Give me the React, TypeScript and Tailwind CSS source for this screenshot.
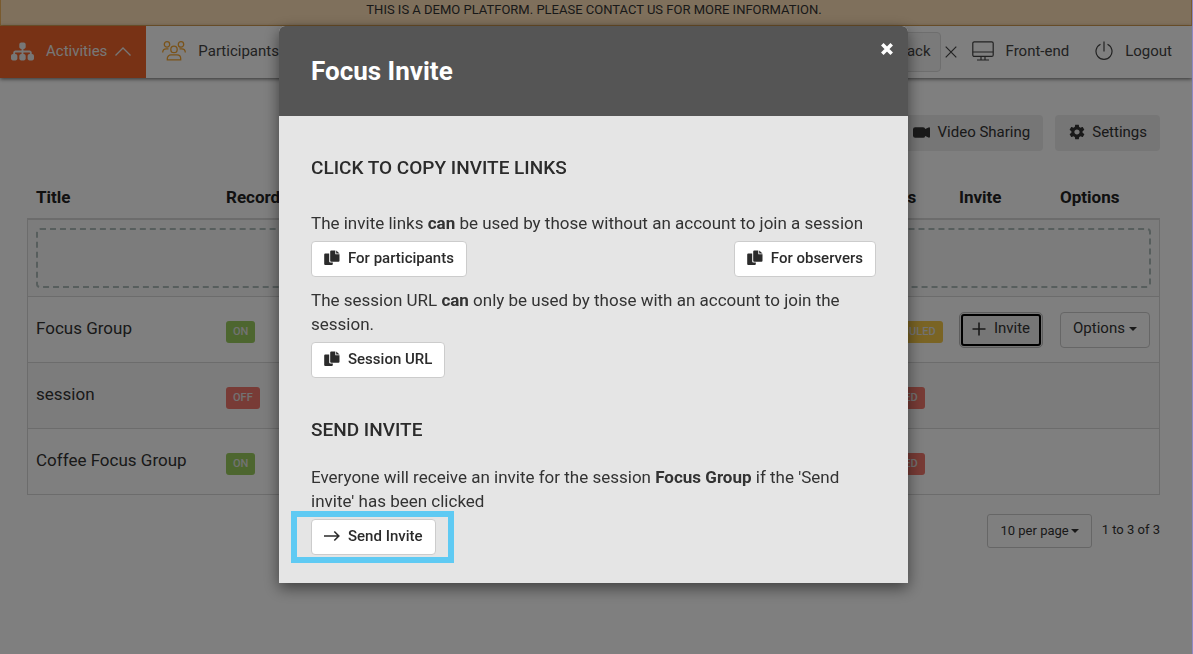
import type { ReactNode } from "react";
import { FaSitemap } from "react-icons/fa6";
import { BsCameraVideoFill } from "react-icons/bs";
import { IoMdSettings } from "react-icons/io";

type Tone = "green" | "red" | "yellow";

const tones: Record<Tone, string> = {
  green: "bg-[#9bcc5f]",
  red: "bg-[#f0776c]",
  yellow: "bg-[#f4c849]",
};

function Badge({ tone, children }: { tone: Tone; children: ReactNode }) {
  return (
    <span
      className={
        "inline-block rounded-[3px] px-[7px] py-[3px] text-[11px] leading-4 font-medium text-[#e4e4e4] " +
        tones[tone]
      }
    >
      {children}
    </span>
  );
}

function Caret() {
  return (
    <svg width="8" height="4" viewBox="0 0 8 4" fill="currentColor" aria-hidden="true">
      <path d="M0 0h8L4 4z" />
    </svg>
  );
}

function PeopleIcon() {
  return (
    <svg width="24" height="20" viewBox="0 0 24 20" fill="none" stroke="currentColor" strokeWidth="1.3" aria-hidden="true">
      <circle cx="5" cy="3.4" r="2.7" />
      <circle cx="19" cy="3.4" r="2.7" />
      <circle cx="12" cy="8.4" r="3.2" />
      <path d="M.7 11.4c0-2.2 1.5-3.6 3.6-3.6h2.2M23.3 11.4c0-2.2-1.5-3.6-3.6-3.6h-2.2" />
      <path d="M5.3 18.8v-1.200c0-2.200 1.600-3.700 3.700-3.700h6c2.100 0 3.700 1.500 3.700 3.700v1.200z" />
    </svg>
  );
}

function MonitorIcon() {
  return (
    <svg width="22" height="20" viewBox="0 0 22 20" fill="none" stroke="currentColor" strokeWidth="1.2" aria-hidden="true">
      <rect x=".8" y=".8" width="20.4" height="14.6" rx="1.5" />
      <path d="M.8 11h20.400M9 15.500v3M13 15.500v3M5 19h12" />
    </svg>
  );
}

function PowerIcon() {
  return (
    <svg width="18" height="20" viewBox="0 0 18 20" fill="none" stroke="currentColor" strokeWidth="1.2" aria-hidden="true">
      <path d="M9 .5v10M5.500 3.200a8 8 0 1 0 7 0" />
    </svg>
  );
}

function CopyIcon() {
  return (
    <svg width="16" height="16" viewBox="0 0 16 16" fill="currentColor" aria-hidden="true">
      <path d="M1.200 3.600H5.200V11.600a1 1 0 0 0 1 1H8.800V13.900a1 1 0 0 1-1 1H1.200a1 1 0 0 1-1-1V4.600a1 1 0 0 1 1-1z" />
      <path d="M7.200.5H11.300V4.200H15.500V10.700a1 1 0 0 1-1 1H7.200a1 1 0 0 1-1-1V1.500a1 1 0 0 1 1-1z" />
      <path d="M12.200.4L15.600 3.500H12.200z" />
    </svg>
  );
}

function ArrowIcon() {
  return (
    <svg width="16" height="12" viewBox="0 0 16 12" fill="none" stroke="currentColor" strokeWidth="1.6" aria-hidden="true">
      <path d="M0 6h14.500M10.300 1.500L14.800 6l-4.500 4.500" />
    </svg>
  );
}

function ModalButton({ icon, children }: { icon: ReactNode; children: ReactNode }) {
  return (
    <button
      type="button"
      className="flex h-9 items-center gap-2 rounded border border-[#ccc] bg-white px-3 pb-0.5 text-[15px] leading-5 font-medium text-[#2b2b2b]"
    >
      {icon}
      {children}
    </button>
  );
}

const rows: { title: string; record: string; status: string; tone: Tone; open: boolean }[] = [
  { title: "Focus Group", record: "ON", status: "SCHEDULED", tone: "yellow", open: true },
  { title: "session", record: "OFF", status: "EXPIRED", tone: "red", open: false },
  { title: "Coffee Focus Group", record: "ON", status: "EXPIRED", tone: "red", open: false },
];

function Page() {
  return (
    <div>
      <div className="h-[26px] border border-t-0 border-[#f3b45c] bg-[#fee0b8] pr-1 text-center text-[13px] leading-5 text-[#333] uppercase">
        This is a demo platform. Please contact us for more information.
      </div>

      <nav className="flex h-[52px] items-center bg-white pr-5 text-[15px] text-[#444] shadow-[0_1px_4px_rgba(0,0,0,0.6)]">
        <a href="#activities" className="flex h-full items-center gap-3 bg-[#f0642a] pr-[15px] pb-0.5 pl-[11px] text-[#eee]">
          <FaSitemap size={23} aria-hidden="true" />
          <span className="flex items-center gap-2">
            Activities
            <svg width="16" height="9" viewBox="0 0 16 9" fill="none" stroke="currentColor" strokeWidth="1.3" aria-hidden="true">
              <path d="M.5 8.500L8 1l7.500 7.500" />
            </svg>
          </span>
        </a>
        <a href="#participants" className="flex h-full items-center gap-3 pb-0.5 pl-4">
          <span className="text-[#f5a633]">
            <PeopleIcon />
          </span>
          Participants
        </a>
        <div className="ml-auto flex items-center">
          <button type="button" className="h-10 rounded border border-[#ddd] bg-[#f4f4f4] px-[9px] pb-0.5">
            Feedback
          </button>
          <button type="button" aria-label="Dismiss feedback" className="mr-[15px] ml-1 flex h-5 w-3 items-center">
            <svg width="12" height="12" viewBox="0 0 12 12" fill="none" stroke="currentColor" strokeWidth="1.2" aria-hidden="true">
              <path d="M.7 .7l10.600 10.600M11.300 .7L.7 11.300" />
            </svg>
          </button>
          <a href="#front-end" className="mr-[26px] flex items-center gap-3 pb-0.5">
            <MonitorIcon />
            Front-end
          </a>
          <a href="#logout" className="flex items-center gap-3 pb-0.5">
            <PowerIcon />
            Logout
          </a>
        </div>
      </nav>

      <main className="mt-[37px] pr-8 pl-[27px] text-[#333]">
        <div className="flex justify-end gap-3">
          <button type="button" className="flex h-9 items-center gap-2 rounded bg-[#ececec] px-[13px] pb-0.5 text-[15px]">
            <BsCameraVideoFill size={17} aria-hidden="true" />
            Video Sharing
          </button>
          <button type="button" className="flex h-9 items-center gap-1.5 rounded bg-[#ececec] px-[13px] pb-0.5 text-[15px]">
            <IoMdSettings size={18} aria-hidden="true" />
            Settings
          </button>
        </div>

        <table className="mt-6 w-full table-fixed border-separate border-spacing-0 text-left text-[17px]">
          <colgroup>
            <col className="w-[190px]" />
            <col />
            <col className="w-[92px]" />
            <col className="w-[101px]" />
            <col className="w-[109px]" />
          </colgroup>
          <thead>
            <tr className="h-[45px] leading-6 text-[#222]">
              {["Title", "Record", "Status", "Invite", "Options"].map((heading) => (
                <th key={heading} scope="col" className="border-b-2 border-[#d9d9d9] px-[9px] font-bold">
                  {heading}
                </th>
              ))}
            </tr>
          </thead>
          <tbody>
            <tr>
              <td colSpan={5} className="h-[77px] border-x border-b border-[#d9d9d9] bg-[#f9f9f9] px-2">
                <div className="h-[60px] rounded border-2 border-dashed border-[#aebcbb]" />
              </td>
            </tr>
            {rows.map((row) => (
              <tr key={row.title} className="h-[66px] even:bg-white odd:bg-[#f9f9f9]">
                <td className="border-b border-l border-[#d9d9d9] px-2 pb-0.5">{row.title}</td>
                <td className="border-b border-[#d9d9d9] px-[9px]">
                  <Badge tone={row.record === "ON" ? "green" : "red"}>{row.record}</Badge>
                </td>
                <td className="border-b border-[#d9d9d9] pl-[9px]">
                  <Badge tone={row.tone}>{row.status}</Badge>
                </td>
                <td className="border-b border-[#d9d9d9] px-[9px]">
                  {row.open && (
                    <button
                      type="button"
                      className="flex h-9 w-[84px] items-center justify-center gap-2 rounded-[5px] border border-[#bbb] bg-[#ececec] pb-0.5 text-[15px] outline-2 -outline-offset-4 outline-black"
                    >
                      <svg width="14" height="14" viewBox="0 0 14 14" stroke="currentColor" strokeWidth="1.6" aria-hidden="true">
                        <path d="M7 .5v13M.5 7h13" />
                      </svg>
                      Invite
                    </button>
                  )}
                </td>
                <td className="border-r border-b border-[#d9d9d9] px-[9px]">
                  {row.open && (
                    <button
                      type="button"
                      className="flex h-9 w-[90px] items-center justify-center gap-1 rounded border border-[#ccc] bg-white pb-0.5 text-[15px]"
                    >
                      Options
                      <Caret />
                    </button>
                  )}
                </td>
              </tr>
            ))}
          </tbody>
        </table>

        <div className="mt-[19px] flex justify-end gap-2.5 text-[13px]">
          <button type="button" className="flex h-[34px] items-center gap-0.5 rounded-[3px] border border-[#ccc] bg-white px-3">
            10 per page
            <Caret />
          </button>
          <span className="leading-8">1 to 3 of 3</span>
        </div>
      </main>
    </div>
  );
}

function InviteDialog() {
  return (
    <div className="fixed inset-0 flex items-start justify-center bg-black/50 pt-[26px] pr-1.5">
      <div
        role="dialog"
        aria-modal="true"
        aria-labelledby="dialog-title"
        className="w-full max-w-[629px] overflow-hidden rounded-t-md bg-[#e5e5e5] text-[#333] shadow-[0_5px_15px_rgba(0,0,0,0.5)]"
      >
        <header className="flex h-[90px] items-start justify-between bg-[#555] pr-[15px] pl-8 text-white">
          <h1 id="dialog-title" className="pt-[29px] text-[26px] leading-8 font-bold">
            Focus Invite
          </h1>
          <button type="button" aria-label="Close" className="mt-[17px]">
            <svg width="12" height="12" viewBox="0 0 12 12" fill="none" stroke="currentColor" strokeWidth="3.6" aria-hidden="true">
              <path d="M1.300 1.300l9.400 9.400M10.700 1.300L1.300 10.700" />
            </svg>
          </button>
        </header>
        <div className="px-8 pt-10 pb-7 text-[17px] leading-6">
          <h2 className="text-[19px] leading-6 font-medium text-[#2b2b2b]">CLICK TO COPY INVITE LINKS</h2>
          <p className="mt-[31px]">
            The invite links <b>can</b> be used by those without an account to join a session
          </p>
          <div className="mt-1.5 flex justify-between">
            <ModalButton icon={<CopyIcon />}>For participants</ModalButton>
            <ModalButton icon={<CopyIcon />}>For observers</ModalButton>
          </div>
          <p className="mt-[11px]">
            The session URL <b>can</b> only be used by those with an account to join the session.
          </p>
          <div className="mt-1.5 flex">
            <ModalButton icon={<CopyIcon />}>Session URL</ModalButton>
          </div>
          <h2 className="mt-10 text-[19px] leading-6 font-medium text-[#2b2b2b]">SEND INVITE</h2>
          <p className="mt-[23px]">
            Everyone will receive an invite for the session <b>Focus Group</b> if the 'Send invite' has been clicked
          </p>
          <div className="mt-1.5 flex">
            <div className="relative">
              <ModalButton icon={<ArrowIcon />}>Send Invite</ModalButton>
              <div className="pointer-events-none absolute -top-2 -right-[18px] -bottom-2 -left-5 border-[6px] border-[#5fcaf3]" />
            </div>
          </div>
        </div>
      </div>
    </div>
  );
}

export default function App() {
  return (
    <div className="relative min-h-screen bg-white font-['Roboto',sans-serif]">
      <div className="border-r border-transparent">
        <Page />
      </div>
      <InviteDialog />
      <div className="fixed inset-y-0 right-0 w-px bg-[#8f88c4]" />
    </div>
  );
}
